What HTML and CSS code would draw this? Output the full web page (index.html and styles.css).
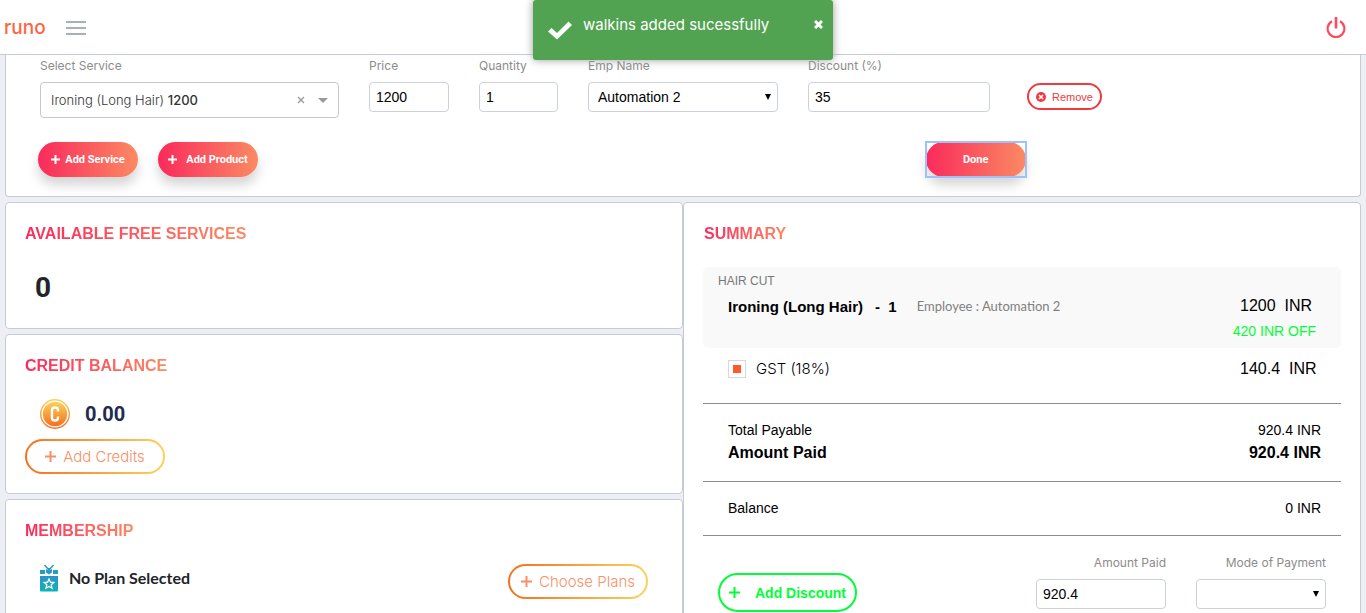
FILE: index.html
```html
<!DOCTYPE html>
<html lang="en">
<head>
<meta charset="utf-8">
<meta name="viewport" content="width=device-width, initial-scale=1">
<title>runo</title>
<link rel="stylesheet" href="styles.css">
</head>
<body>
<header class="topbar">
  <a class="logo" href="#">runo</a>
  <button class="icon-btn" type="button" aria-label="Menu">
    <svg width="20" height="16" viewBox="0 0 20 16" stroke="#8a95a0" stroke-width="1.600"><path d="M0 2h20M0 8h20M0 14h20"/></svg>
  </button>
  <button class="icon-btn power" type="button" aria-label="Log out">
    <svg width="20" height="22" viewBox="0 0 20 22" fill="none" stroke="#ff4a5c" stroke-width="2.200"><path d="M6 4.200a8.400 8.400 0 1 0 8 0"/><path d="M10 0v11.500" stroke-width="2.600"/></svg>
  </button>
</header>
<div class="toast" role="status">
  <svg class="toast-check" width="24" height="19" viewBox="0 0 24 19"><path d="M0 10.500 3.500 7l5.500 5L20.500 0.500 24 4 9 18.500z" fill="#fff"/></svg>
  <span class="toast-text">walkins added sucessfully</span>
  <button class="icon-btn toast-close" type="button" aria-label="Close">
    <svg width="9" height="9" viewBox="0 0 9 9" stroke="#fff" stroke-width="3"><path d="M1 1l7 7M8 1 1 8"/></svg>
  </button>
</div>

<main class="page">
  <section class="card booking">
    <div class="fields">
      <div class="field">
        <label class="label" for="service">Select Service</label>
        <div class="combo" id="service" role="combobox" tabindex="0" aria-expanded="false">
          <span class="combo-value">Ironing (Long Hair) <b class="combo-price">1200</b></span>
          <svg width="8" height="8" viewBox="0 0 8 8" stroke="#999" stroke-width="1.300"><path d="M1 1l6 6M7 1 1 7"/></svg>
          <svg width="10" height="5" viewBox="0 0 10 5" fill="#999"><path d="M0 0h10L5 5z"/></svg>
        </div>
      </div>
      <div class="field">
        <label class="label" for="price">Price</label>
        <input class="input" id="price" type="text" value="1200">
      </div>
      <div class="field">
        <label class="label" for="qty">Quantity</label>
        <input class="input" id="qty" type="text" value="1">
      </div>
      <div class="field">
        <label class="label" for="emp">Emp Name</label>
        <div class="select-wrap">
          <select class="input select" id="emp"><option>Automation 2</option></select>
          <svg class="arrow" width="6" height="6" viewBox="0 0 6 6"><path d="M0 0h6L3 6z"/></svg>
        </div>
      </div>
      <div class="field">
        <label class="label" for="disc">Discount (%)</label>
        <input class="input" id="disc" type="text" value="35">
      </div>
      <button class="remove" type="button">
        <svg width="10" height="10" viewBox="0 0 10 10"><circle cx="5" cy="5" r="5" fill="#f03a3f"/><path d="M3 3l4 4M7 3 3 7" stroke="#fff" stroke-width="1.600"/></svg>
        Remove
      </button>
    </div>
    <div class="actions">
      <button class="pill" type="button"><svg class="plus" width="9" height="9" viewBox="0 0 9 9"><path d="M4.500 0v9M0 4.500h9"/></svg>Add Service</button>
      <button class="pill pill-wide" type="button"><svg class="plus" width="9" height="9" viewBox="0 0 9 9"><path d="M4.500 0v9M0 4.500h9"/></svg>Add Product</button>
      <div class="focus-box"><button class="pill" type="button">Done</button></div>
    </div>
  </section>

  <div class="columns">
    <div class="stack">
      <section class="card">
        <h2 class="title">AVAILABLE FREE SERVICES</h2>
        <p class="count">0</p>
      </section>
      <section class="card">
        <h2 class="title">CREDIT BALANCE</h2>
        <div class="credit">
          <svg width="30" height="30" viewBox="0 0 30 30">
            <defs><linearGradient id="gold" x1="0" y1="0" x2="0" y2="1"><stop offset="0" stop-color="#f9d25c"/><stop offset="1" stop-color="#f4701f"/></linearGradient></defs>
            <circle cx="15" cy="15" r="14.300" fill="#fff" stroke="url(#gold)" stroke-width="1.400"/>
            <circle cx="15" cy="15" r="12.200" fill="url(#gold)"/>
            <path d="M18 12.500v-1.500q0-2.500-3-2.500t-3 2.500v8q0 2.500 3 2.500t3-2.500v-1.500" fill="none" stroke="#fff" stroke-width="2.400"/>
          </svg>
          <strong class="credit-value">0.00</strong>
        </div>
        <button class="gold-btn" type="button"><svg class="plus" width="11" height="11" viewBox="0 0 11 11"><path d="M5.500 0v11M0 5.500h11"/></svg>Add Credits</button>
      </section>
      <section class="card">
        <h2 class="title">MEMBERSHIP</h2>
        <div class="member">
          <svg width="18" height="28" viewBox="0 0 18 28">
            <defs><linearGradient id="teal" x1="0" y1="0" x2="0" y2="1"><stop offset="0" stop-color="#2b93c8"/><stop offset="1" stop-color="#10b5b5"/></linearGradient></defs>
            <path d="M4.500 1 9 6l4.500-5M9 4v3" fill="none" stroke="#2b93c8" stroke-width="1.500"/>
            <path d="M0 6h5v4H0zM13 6h5v4h-5zM6 5l3 1.500L12 5v3.500L9 10.500 6 8.500z" fill="#279ac6"/>
            <path d="M0 12h18v14.500q0 1-1 1H1q-1 0-1-1z" fill="url(#teal)"/>
            <path d="M9 15l1.400 3.200 3.400.3-2.600 2.300.8 3.400L9 22.400l-3 1.800.8-3.400-2.600-2.300 3.400-.3z" fill="none" stroke="#fff" stroke-width="1.300"/>
          </svg>
          <span class="plan">No Plan Selected</span>
          <button class="gold-btn" type="button"><svg class="plus" width="11" height="11" viewBox="0 0 11 11"><path d="M5.500 0v11M0 5.500h11"/></svg>Choose Plans</button>
        </div>
      </section>
    </div>

    <section class="card summary">
      <h2 class="title">SUMMARY</h2>
      <div class="item">
        <div class="category">HAIR CUT</div>
        <div class="line">
          <strong class="item-name">Ironing (Long Hair)</strong>
          <strong class="item-qty">-&nbsp; 1</strong>
          <span class="employee">Employee : Automation 2</span>
          <span class="amount">1200&nbsp; INR</span>
        </div>
        <div class="off">420 INR OFF</div>
      </div>
      <div class="line gst">
        <input class="check" type="checkbox" id="gst" checked>
        <label class="gst-label" for="gst">GST (18%)</label>
        <span class="amount">140.4&nbsp; INR</span>
      </div>
      <div class="totals">
        <div class="total"><span>Total Payable</span><span>920.4 INR</span></div>
        <div class="total total-paid"><span>Amount Paid</span><span>920.4 INR</span></div>
      </div>
      <div class="totals balance">
        <div class="total"><span>Balance</span><span>0 INR</span></div>
      </div>
      <div class="pay">
        <button class="discount" type="button"><svg class="plus" width="11" height="11" viewBox="0 0 11 11"><path d="M5.500 0v11M0 5.500h11"/></svg>Add Discount</button>
        <div class="field pay-field">
          <label class="label" for="paid">Amount Paid</label>
          <input class="input" id="paid" type="text" value="920.4">
        </div>
        <div class="field pay-field">
          <label class="label" for="mode">Mode of Payment</label>
          <div class="select-wrap">
            <select class="input select" id="mode"><option></option></select>
            <svg class="arrow" width="6" height="6" viewBox="0 0 6 6"><path d="M0 0h6L3 6z"/></svg>
          </div>
        </div>
      </div>
    </section>
  </div>
</main>
</body>
</html>
```
FILE: styles.css
```css
* { box-sizing: border-box; }
body {
  margin: 0;
  height: 100vh;
  overflow: hidden;
  display: flex;
  flex-direction: column;
  background: #eeeff5;
  font-family: "Liberation Sans", Arial, sans-serif;
  font-size: 14px;
  color: #000;
}
button { font-family: inherit; cursor: pointer; }
svg { flex: none; display: block; }

.topbar {
  flex: none;
  display: flex;
  align-items: center;
  gap: 20px;
  height: 55px;
  padding: 1px 20px 0 4px;
  background: #fff;
  border-bottom: 1px solid #c5ccd6;
}
.logo {
  font: 500 19px/24px Inter, sans-serif;
  color: #ff6444;
  text-decoration: none;
}
.icon-btn { padding: 0; border: 0; background: none; }
.power { margin-left: auto; }

.toast {
  position: absolute;
  top: 0;
  left: 50%;
  transform: translateX(-50%);
  display: flex;
  align-items: flex-start;
  width: 300px;
  height: 60px;
  padding: 15px 10px 0 15px;
  border-radius: 3px;
  background: #51a351;
  box-shadow: 0 0 8px #999;
  color: #fff;
}
.toast-check { margin-top: 6px; }
.toast-text { margin-left: 11px; font: 400 15px/20px Inter, sans-serif; }
.toast-close { margin: 5px 0 0 auto; }

.page {
  flex: 1;
  min-height: 0;
  overflow: hidden;
  display: flex;
  flex-direction: column;
  gap: 5px;
  padding: 0 5px;
}
.card {
  flex: none;
  background: #fff;
  border: 1px solid #c5ccd6;
  border-radius: 4px;
  padding: 21px 20px 0 19px;
}

.booking {
  border-top: 0;
  border-radius: 0 0 4px 4px;
  padding: 3px 37px 19px 34px;
}
.fields {
  display: grid;
  grid-template-columns: 299fr 80fr 79fr 190fr 182fr 303fr;
  column-gap: 30px;
}
.field { display: flex; flex-direction: column; gap: 8px; min-width: 0; }
.label { font: 400 12px/16px Inter, sans-serif; color: #8c8c8c; }
.input {
  width: 100%;
  height: 30px;
  padding: 0 6px;
  border: 1px solid #ccd2d8;
  border-radius: 4px;
  background: #fff;
  font: 14px "Liberation Sans", Arial, sans-serif;
  color: #000;
}
.select-wrap { position: relative; }
.select { appearance: none; padding: 0 20px 0 9px; }
.arrow { position: absolute; right: 7px; top: 12px; pointer-events: none; }
.combo {
  display: flex;
  align-items: center;
  height: 36px;
  gap: 13px;
  padding: 0 10px;
  border: 1px solid #c8c8c8;
  border-radius: 4px;
  font: 300 13px/20px Inter, sans-serif;
  color: #333;
}
.combo-value { flex: 1; }
.combo-price { font-weight: 500; }
.remove {
  display: flex;
  align-items: center;
  justify-content: center;
  gap: 6px;
  justify-self: start;
  align-self: start;
  margin: 25px 0 0 7px;
  width: 75px;
  height: 27px;
  padding: 0;
  border: 2px solid #f03a3f;
  border-radius: 14px;
  background: #fff;
  color: #f03a3f;
  font-size: 11px;
}
.actions { display: flex; gap: 20px; margin: 24px 0 0 -2px; }
.plus { fill: none; stroke: currentColor; stroke-width: 2; }
.pill {
  display: flex;
  align-items: center;
  justify-content: center;
  gap: 5px;
  width: 100px;
  height: 35px;
  padding: 0;
  border: 0;
  border-radius: 18px;
  background: linear-gradient(90deg, #fa2a5c, #fb8a63);
  box-shadow: 0 8px 12px rgba(0, 0, 0, .17);
  color: #fff;
  font: 700 11px/16px Roboto, sans-serif;
}
.pill-wide { gap: 9px; }
.focus-box { margin-left: 50.4%; outline: 2px solid #9ec1fb; outline-offset: -1px; }

.columns { flex: 1; min-height: 0; display: grid; grid-template-columns: 1fr 1fr; }
.stack { display: flex; flex-direction: column; gap: 5px; min-width: 0; }
.title {
  width: fit-content;
  margin: 0;
  font-size: 16px;
  line-height: 20px;
  font-weight: 700;
  background: linear-gradient(90deg, #fa2a5c, #fb8a63);
  -webkit-background-clip: text;
  background-clip: text;
  color: transparent;
}
.count { margin: 27px 0 23px 10px; font: 700 28px/34px Roboto, sans-serif; color: #212529; }
.credit { display: flex; align-items: center; gap: 15px; margin: 23px 0 10px 15px; }
.credit-value { font: 700 20px/24px Roboto, sans-serif; color: #222b4f; }
.gold-btn {
  display: flex;
  align-items: center;
  justify-content: center;
  gap: 7px;
  width: 140px;
  height: 35px;
  margin-bottom: 19px;
  padding: 0;
  border: 2px solid transparent;
  border-radius: 18px;
  background: linear-gradient(#fff, #fff) padding-box, linear-gradient(90deg, #f4701f, #fbd25c) border-box;
  color: #f98f66;
  font: 300 15px/20px Inter, sans-serif;
}
.member { display: flex; align-items: flex-start; margin: 23px 14px 0 15px; }
.plan { margin-left: 11px; font: 700 16px/28px Lato, sans-serif; color: #212529; }
.member .gold-btn { margin-left: auto; }

.summary { padding: 21px 19px 0 20px; }
.item { margin-top: 23px; height: 81px; padding: 6px 0 0 15px; border-radius: 5px; background: #f9f9f9; margin-left: -1px; }
.category { font-size: 12px; line-height: 16px; color: #777; }
.line { display: flex; align-items: center; padding-left: 10px; }
.item .line { margin-top: 7px; height: 20px; }
.item-name { font-size: 15px; }
.item-qty { margin-left: 12px; font-size: 15px; }
.employee { margin-left: 20px; font: 400 13px/20px Lato, sans-serif; color: #808080; }
.amount { width: 101px; margin-left: auto; font-size: 16px; line-height: 20px; }
.off { margin-right: 25px; font-size: 14px; line-height: 30px; text-align: right; color: #00ff37; }
.gst { height: 42px; padding-left: 24px; }
.check {
  appearance: none;
  width: 18px;
  height: 18px;
  margin: 0;
  border: 1px solid #d8d8d8;
  background: #fff;
}
.check:checked { background: #ff5a2c content-box; padding: 4px; }
.gst-label { margin-left: 10px; font: 300 15px/20px Inter, sans-serif; }
.totals {
  margin-left: -1px;
  margin-top: 13px;
  padding: 16px 20px 0 25px;
  height: 78px;
  border-top: 1px solid #8c8c8c;
}
.total { display: flex; justify-content: space-between; line-height: 20px; }
.total-paid { font-size: 16px; font-weight: 700; line-height: 26px; }
.balance { margin-top: 0; height: 55px; border-bottom: 1px solid #8c8c8c; }
.pay { display: flex; gap: 30px; margin: 19px 15px 0 14px; }
.discount {
  display: flex;
  align-items: center;
  justify-content: center;
  gap: 15px;
  width: 139px;
  height: 39px;
  margin: 18px auto 0 0;
  padding: 0;
  border: 2px solid #00ff37;
  border-radius: 20px;
  background: #fff;
  color: #00ff37;
  font-size: 14px;
  font-weight: 700;
}
.pay-field { width: 130px; text-align: right; }
```
